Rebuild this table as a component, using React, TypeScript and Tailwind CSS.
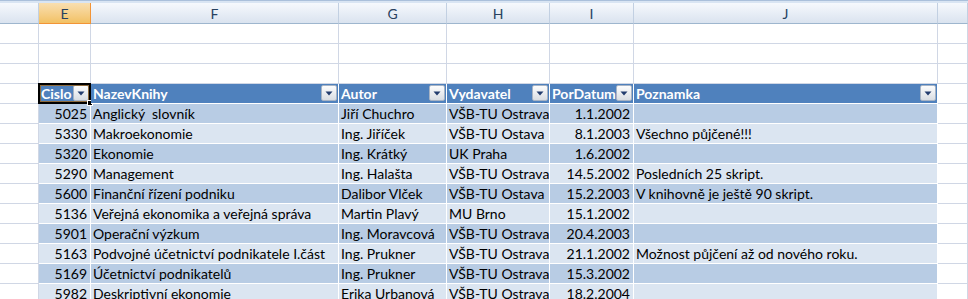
import React from "react";

const rows: string[][] = [
  ["5025", "Anglický  slovník", "Jiří Chuchro", "VŠB-TU Ostrava", "1.1.2002", ""],
  ["5330", "Makroekonomie", "Ing. Jiříček", "VŠB-TU Ostava", "8.1.2003", "Všechno půjčené!!!"],
  ["5320", "Ekonomie", "Ing. Krátký", "UK Praha", "1.6.2002", ""],
  ["5290", "Management", "Ing. Halašta", "VŠB-TU Ostrava", "14.5.2002", "Posledních 25 skript."],
  ["5600", "Finanční řízení podniku", "Dalibor Vlček", "VŠB-TU Ostava", "15.2.2003", "V knihovně je ještě 90 skript."],
  ["5136", "Veřejná ekonomika a veřejná správa", "Martin Plavý", "MU Brno", "15.1.2002", ""],
  ["5901", "Operační výzkum", "Ing. Moravcová", "VŠB-TU Ostrava", "20.4.2003", ""],
  ["5163", "Podvojné účetnictví podnikatele I.část", "Ing. Prukner", "VŠB-TU Ostrava", "21.1.2002", "Možnost půjčení až od nového roku."],
  ["5169", "Účetnictví podnikatelů", "Ing. Prukner", "VŠB-TU Ostrava", "15.3.2002", ""],
  ["5982", "Deskriptivní ekonomie", "Erika Urbanová", "VŠB-TU Ostrava", "18.2.2004", ""],
];

const GRID = "grid grid-cols-[39px_52px_248px_108px_103px_84px_304px_1fr]";

function Dropdown() {
  return (
    <div className="ml-auto mr-[1px] mt-[-1px] flex h-[16px] w-[16px] shrink-0 items-center justify-center rounded-[2px] border border-[#a7b3c4] bg-gradient-to-b from-[#fdfdfd] to-[#d9dde3]">
      <svg width="8" height="5" viewBox="0 0 8 5">
        <path d="M0.5 0.5 H7.5 L4 4.5 Z" fill="#233c6e" />
      </svg>
    </div>
  );
}

function ColHead({ label, active }: { label: string; active?: boolean }) {
  return (
    <div
      className={
        active
          ? "flex items-center justify-center border-r border-b border-[#f29436] bg-gradient-to-b from-[#f9dfb0] to-[#f2c163] text-[#27415f]"
          : "flex items-center justify-center border-r border-b border-r-[#c2d0e2] border-b-[#9eb6ce] bg-gradient-to-b from-[#f6f9fd] to-[#dae3ef] text-[#27415f]"
      }
    >
      {label}
    </div>
  );
}

function EmptyRow() {
  return (
    <div className={`${GRID} h-[20px]`}>
      {Array.from({ length: 8 }).map((_, i) => (
        <div key={i} className="border-r border-b border-[#d0d7e5] bg-white" />
      ))}
    </div>
  );
}

export default function App() {
  const headers = ["Cislo", "NazevKnihy", "Autor", "Vydavatel", "PorDatum", "Poznamka"];
  return (
    <div
      className="h-[299px] w-[968px] overflow-hidden bg-white text-[14px] leading-[19px] text-black"
      style={{ fontFamily: "Lato, 'Open Sans', sans-serif" }}
    >
      {/* column headers */}
      <div className="border-t border-[#aac0db]">
        <div className="h-[2px] bg-[#d9e5f3]" />
        <div className={`${GRID} h-[21px]`}>
          <ColHead label="" />
          <ColHead label="E" active />
          <ColHead label="F" />
          <ColHead label="G" />
          <ColHead label="H" />
          <ColHead label="I" />
          <ColHead label="J" />
          <ColHead label="" />
        </div>
      </div>

      <EmptyRow />
      <EmptyRow />
      <EmptyRow />

      {/* table header */}
      <div className={`${GRID} h-[20px]`}>
        <div className="border-r border-b border-[#d0d7e5] bg-white" />
        {headers.map((h, i) => (
          <div
            key={h}
            className="relative flex items-center border-r border-b border-white bg-[#4f81bd] pl-[2px] font-bold text-white"
          >
            <span className="whitespace-pre">{h}</span>
            <Dropdown />
            {i === 0 && (
              <>
                <div className="pointer-events-none absolute left-[-1px] top-[-1px] h-[21px] w-[53px] border-2 border-black">
                  <div className="h-full w-full border border-[#8c6a3d]" />
                </div>
                <div className="absolute bottom-[-3px] right-[-3px] h-[6px] w-[6px] border border-white bg-black" />
              </>
            )}
          </div>
        ))}
        <div className="border-r border-b border-[#d0d7e5] bg-white" />
      </div>

      {/* data rows */}
      {rows.map((r, ri) => {
        const bg = ri % 2 === 0 ? "bg-[#b8cce4]" : "bg-[#dbe5f1]";
        return (
          <div key={ri} className={`${GRID} h-[20px]`}>
            <div className="border-r border-b border-[#d0d7e5] bg-white" />
            {r.map((c, ci) => (
              <div
                key={ci}
                className={`flex items-center overflow-hidden whitespace-pre border-r border-b border-white ${bg} ${
                  ci === 0 || ci === 4 ? "justify-end pr-[3px]" : "pl-[2px]"
                }`}
              >
                {c}
              </div>
            ))}
            <div className="border-r border-b border-[#d0d7e5] bg-white" />
          </div>
        );
      })}
    </div>
  );
}
